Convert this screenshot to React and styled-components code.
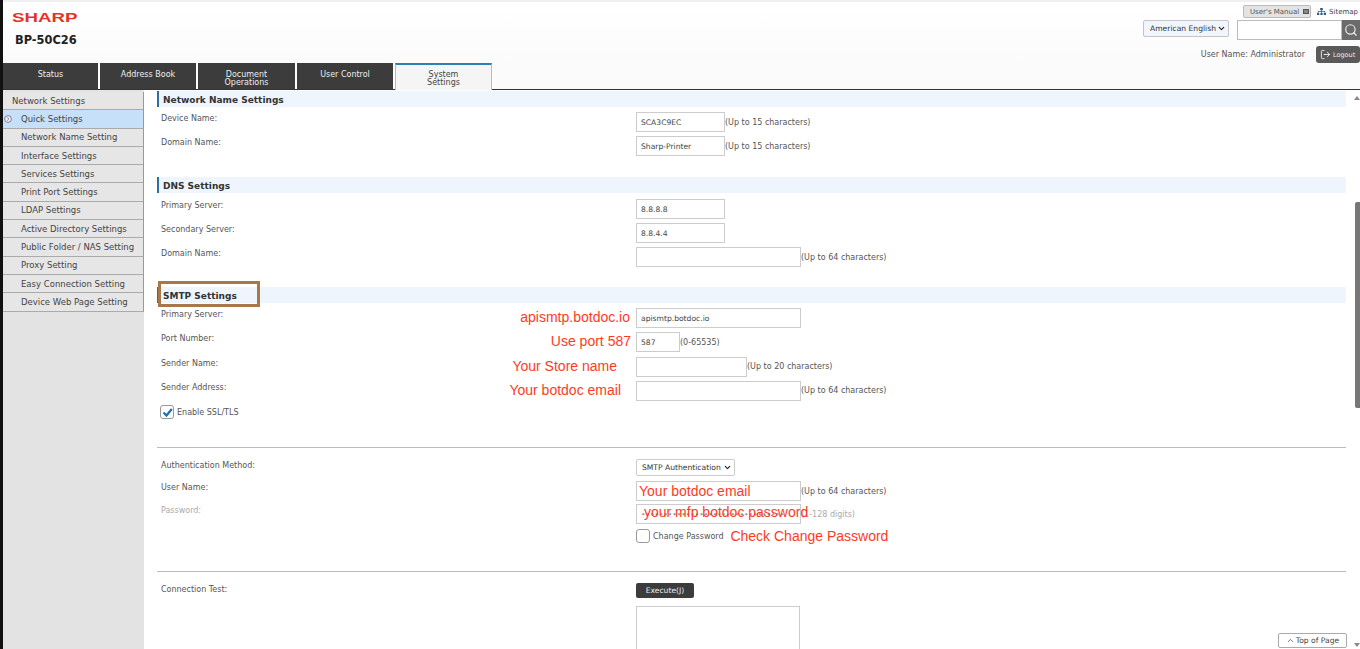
import React from 'react';
import styled, { createGlobalStyle } from 'styled-components';
import { Search, LogOut, ChevronUp, ChevronDown } from 'lucide-react';
import { FaSitemap } from 'react-icons/fa';

const GlobalStyle = createGlobalStyle`
  html, body {
    margin: 0;
    padding: 0;
    height: 100%;
    overflow: hidden;
    background: #fff;
  }
  * { box-sizing: border-box; }
  body {
    font-family: "DejaVu Sans", Verdana, sans-serif;
    font-size: 8px;
    color: #444;
  }
`;

const Page = styled.div`
  height: 649px;
  border-left: 3px solid #111;
  display: flex;
  flex-direction: column;
  overflow: hidden;
  position: relative;
`;

const Header = styled.header`
  height: 63px;
  flex: none;
  display: flex;
  justify-content: space-between;
  border-top: 2px solid #f0f0f0;
  background: linear-gradient(#fff, #fbfbfb);
`;

const Brand = styled.div`
  padding: 9px 0 0 9px;
`;

const Logo = styled.div`
  font-family: "Liberation Sans", Arial, sans-serif;
  font-weight: 700;
  font-size: 13px;
  line-height: 14px;
  color: #e8302a;
  transform: scaleX(1.44);
  transform-origin: left center;
`;

const Model = styled.div`
  margin: 8px 0 0 3px;
  font-weight: 700;
  font-size: 11.4px;
  line-height: 14px;
  color: #222;
`;

const Tools = styled.div`
  display: flex;
  flex-direction: column;
  align-items: flex-end;
`;

const LinkRow = styled.div`
  display: flex;
  align-items: center;
  height: 13px;
  margin-top: 3px;
  gap: 6px;
  padding-right: 2px;
`;

const ManualButton = styled.span`
  display: flex;
  align-items: center;
  gap: 4px;
  width: 68px;
  height: 13px;
  padding-left: 6px;
  font-size: 7px;
  color: #555;
  background: #e3e3e3;
  border: 1px solid #bbb;
  border-radius: 2px;
`;

const ManualIcon = styled.i`
  display: block;
  width: 6px;
  height: 5px;
  border: 1px solid #555;
  background: #888;
`;

const SiteLink = styled.span`
  display: flex;
  align-items: center;
  gap: 3px;
  font-size: 7px;
  color: #444;
  svg { color: #2d5c8a; }
`;

const SearchRow = styled.div`
  display: flex;
  align-items: flex-start;
  margin-top: 2px;
  gap: 8px;
`;

const SelectWrap = styled.div`
  position: relative;
  width: ${(p) => p.$w}px;
  height: 17px;
  svg {
    position: absolute;
    right: 3px;
    top: 4px;
    color: #222;
    pointer-events: none;
  }
`;

const PlainSelect = styled.select`
  appearance: none;
  width: 100%;
  height: 100%;
  padding: 0 0 0 ${(p) => p.$pad}px;
  font-family: "DejaVu Sans", Verdana, sans-serif;
  font-size: 7.6px;
  color: #333;
  background: ${(p) => p.$bg};
  border: 1px solid ${(p) => p.$line};
  border-radius: 2px;
`;

const SearchBox = styled.div`
  display: flex;
  width: 123px;
  height: 20px;
`;

const SearchInput = styled.div`
  flex: 1;
  background: #fff;
  border: 1px solid #bbb;
`;

const SearchButton = styled.div`
  width: 18px;
  display: flex;
  align-items: center;
  justify-content: center;
  background: #6b6b6b;
  color: #eee;
`;

const UserRow = styled.div`
  display: flex;
  align-items: center;
  margin-top: 6px;
  gap: 11px;
`;

const UserName = styled.span`
  font-size: 8px;
  color: #555;
`;

const LogoutButton = styled.span`
  display: flex;
  align-items: center;
  gap: 2px;
  width: 44px;
  height: 17px;
  padding-left: 4px;
  font-size: 6.5px;
  color: #eee;
  background: #5a5a5a;
  border-radius: 3px;
`;

const TabBar = styled.nav`
  height: 27px;
  flex: none;
  display: flex;
  gap: 2px;
  border-bottom: 1px solid #333;
  background: #fbfbfb;
`;

const Tab = styled.div`
  width: ${(p) => p.$w}px;
  height: ${(p) => (p.$active ? '27px' : '26px')};
  padding-top: ${(p) => (p.$active ? '6px' : '8px')};
  text-align: center;
  font-size: 8px;
  line-height: 8px;
  color: ${(p) => (p.$active ? '#444' : '#eee')};
  background: ${(p) => (p.$active ? '#f5f5f5' : '#3c3c3c')};
  border: ${(p) => (p.$active ? '1px solid #bbb' : 'none')};
  border-top: ${(p) => (p.$active ? '2px solid #2f7fb5' : 'none')};
  border-bottom: none;
`;

const Body = styled.div`
  flex: 1;
  min-height: 0;
  display: flex;
`;

const Sidebar = styled.aside`
  width: 141px;
  flex: none;
  background: #e3e3e3;
  padding-top: 2px;
`;

const MenuList = styled.ul`
  list-style: none;
  margin: 0;
  padding: 0;
  border-right: 1px solid #999;
`;

const MenuItem = styled.li`
  height: 18.3px;
  display: flex;
  align-items: center;
  position: relative;
  padding-left: ${(p) => (p.$head ? '9px' : '18px')};
  font-size: 8.5px;
  color: #444;
  white-space: nowrap;
  background: ${(p) => (p.$active ? '#c5e0f8' : '#e6e6e6')};
  border-bottom: 1px solid #aaa;
`;

const ActiveDot = styled.svg`
  position: absolute;
  left: 1px;
  top: 5px;
`;

const Main = styled.main`
  flex: 1;
  min-width: 0;
  padding: 1px 0 0 13px;
  background: #fff;
`;

const Section = styled.section`
  margin-top: ${(p) => p.$top || 0}px;
`;

const SectionHead = styled.h2`
  margin: 0 0 ${(p) => p.$gap || 5}px;
  height: 16px;
  display: flex;
  align-items: center;
  position: relative;
  padding: 1px 0 0 4px;
  font-size: 9px;
  font-weight: 700;
  color: #333;
  background: #eef5fd;
  border-left: 2px solid #2a6fa8;
`;

const Highlight = styled.span`
  position: absolute;
  left: -1px;
  top: -6px;
  width: 102px;
  height: 26px;
  border: 3px solid #a9784a;
`;

const Row = styled.div`
  display: grid;
  grid-template-columns: 479px 1fr;
  height: ${(p) => p.$h || 24.3}px;
`;

const LabelCell = styled.div`
  display: flex;
  justify-content: space-between;
  padding-left: 4px;
  padding-right: ${(p) => p.$pad || 0}px;
`;

const Label = styled.label`
  font-size: 8px;
  line-height: 14px;
  color: ${(p) => (p.$muted ? '#aaa' : '#555')};
`;

const Note = styled.span`
  font-family: "Liberation Sans", Arial, sans-serif;
  font-size: 14px;
  line-height: 18px;
  color: #ff3b1f;
  white-space: nowrap;
`;

const Field = styled.div`
  display: flex;
  align-items: ${(p) => (p.$start ? 'flex-start' : 'center')};
  align-self: start;
  position: relative;
  height: 20px;
  font-size: 8px;
  color: ${(p) => (p.$muted ? '#aaa' : '#555')};
`;

const TextBox = styled.input`
  width: ${(p) => p.$w}px;
  height: 20px;
  padding: 0 4px;
  font-family: "DejaVu Sans", Verdana, sans-serif;
  font-size: 7.6px;
  color: ${(p) => (p.$muted ? '#999' : '#444')};
  background: #fff;
  border: 1px solid #ccc;
  outline: none;
`;

const OverNote = styled(Note)`
  position: absolute;
  left: ${(p) => p.$left}px;
  top: ${(p) => p.$topOff}px;
`;

const Check = styled.span`
  display: inline-flex;
  align-items: center;
  justify-content: center;
  width: 14px;
  height: 14px;
  flex: none;
  background: #fff;
  border: 1px solid #999;
  border-radius: 3px;
`;

const CheckRow = styled.div`
  display: flex;
  align-items: center;
  gap: 3px;
  height: 14px;
  padding-left: ${(p) => p.$pad}px;
  font-size: 8px;
  color: #555;
`;

const Rule = styled.hr`
  margin: ${(p) => p.$top}px 0 ${(p) => p.$bottom}px;
  border: none;
  border-top: 1px solid #bbb;
`;

const ExecuteButton = styled.button`
  width: 58px;
  height: 15px;
  padding: 0;
  font-family: "DejaVu Sans", Verdana, sans-serif;
  font-size: 7.6px;
  color: #eee;
  background: #3c3c3c;
  border: none;
  border-radius: 2px;
`;

const ResultBox = styled.div`
  margin-left: 479px;
  width: 164px;
  height: 60px;
  background: #fff;
  border: 1px solid #ccc;
`;

const Scrollbar = styled.div`
  width: 14px;
  flex: none;
  display: flex;
  flex-direction: column;
  align-items: flex-end;
  padding-top: 6px;
  background: #fff;
`;

const ArrowUp = styled.i`
  width: 0;
  height: 0;
  border-left: 3px solid transparent;
  border-right: 3px solid transparent;
  border-bottom: 4px solid #888;
`;

const ArrowDown = styled(ArrowUp)`
  margin-top: 235px;
  border-bottom: none;
  border-top: 4px solid #888;
`;

const Thumb = styled.div`
  width: 5px;
  height: 206px;
  margin-top: 102px;
  background: #777;
  border-radius: 2px 0 0 2px;
`;

const TopOfPage = styled.span`
  position: absolute;
  right: 13px;
  bottom: 1px;
  width: 69px;
  height: 15px;
  display: flex;
  align-items: center;
  justify-content: center;
  gap: 1px;
  font-size: 7.6px;
  color: #444;
  background: #fff;
  border: 1px solid #aaa;
  border-radius: 2px;
`;

const tabs = [
  { w: 95, label: 'Status' },
  { w: 96, label: 'Address Book' },
  { w: 97, label: 'Document Operations' },
  { w: 96, label: 'User Control' },
  { w: 97, label: 'System Settings', active: true },
];

const menu = [
  'Quick Settings',
  'Network Name Setting',
  'Interface Settings',
  'Services Settings',
  'Print Port Settings',
  'LDAP Settings',
  'Active Directory Settings',
  'Public Folder / NAS Setting',
  'Proxy Setting',
  'Easy Connection Setting',
  'Device Web Page Setting',
];

const FormRow = ({ label, note, pad, w, value, hint, h }) => (
  <Row $h={h}>
    <LabelCell $pad={pad}>
      <Label>{label}</Label>
      {note && <Note>{note}</Note>}
    </LabelCell>
    <Field>
      <TextBox $w={w} type="text" defaultValue={value} readOnly />
      {hint}
    </Field>
  </Row>
);

const App = () => (
  <Page>
    <GlobalStyle />
    <Header>
      <Brand>
        <Logo>SHARP</Logo>
        <Model>BP-50C26</Model>
      </Brand>
      <Tools>
        <LinkRow>
          <ManualButton>
            User's Manual <ManualIcon />
          </ManualButton>
          <SiteLink>
            <FaSitemap size={9} /> Sitemap
          </SiteLink>
        </LinkRow>
        <SearchRow>
          <SelectWrap $w={86}>
            <PlainSelect $pad={6} $bg="#f1f6fc" $line="#c4c4c4" defaultValue="en">
              <option value="en">American English</option>
            </PlainSelect>
            <ChevronDown size={9} strokeWidth={3} />
          </SelectWrap>
          <SearchBox>
            <SearchInput />
            <SearchButton>
              <Search size={14} />
            </SearchButton>
          </SearchBox>
        </SearchRow>
        <UserRow>
          <UserName>User Name: Administrator</UserName>
          <LogoutButton>
            <LogOut size={11} /> Logout
          </LogoutButton>
        </UserRow>
      </Tools>
    </Header>

    <TabBar>
      {tabs.map((t) => (
        <Tab key={t.label} $w={t.w} $active={t.active}>
          {t.label.includes('Document') || t.active ? (
            <span>
              {t.label.split(' ')[0]}
              <br />
              {t.label.split(' ')[1]}
            </span>
          ) : (
            t.label
          )}
        </Tab>
      ))}
    </TabBar>

    <Body>
      <Sidebar>
        <MenuList>
          <MenuItem $head>Network Settings</MenuItem>
          {menu.map((m, i) => (
            <MenuItem key={m} $active={i === 0}>
              {i === 0 && (
                <ActiveDot width="8" height="8" viewBox="0 0 8 8">
                  <circle cx="4" cy="4" r="3.4" fill="#eef" stroke="#667" strokeWidth="0.8" />
                  <path d="M3.2 2.4 L4.8 4 L3.2 5.6" fill="none" stroke="#667" strokeWidth="0.8" />
                </ActiveDot>
              )}
              {m}
            </MenuItem>
          ))}
        </MenuList>
      </Sidebar>

      <Main>
        <Section>
          <SectionHead>Network Name Settings</SectionHead>
          <FormRow label="Device Name:" w={89} value="SCA3C9EC" hint="(Up to 15 characters)" h={24} />
          <FormRow label="Domain Name:" w={89} value="Sharp-Printer" hint="(Up to 15 characters)" h={24} />
        </Section>

        <Section $top={17}>
          <SectionHead $gap={6}>DNS Settings</SectionHead>
          <FormRow label="Primary Server:" w={89} value="8.8.8.8" h={24} />
          <FormRow label="Secondary Server:" w={89} value="8.8.4.4" h={24} />
          <FormRow label="Domain Name:" w={165} hint="(Up to 64 characters)" h={24} />
        </Section>

        <Section $top={16}>
          <SectionHead>
            SMTP Settings
            <Highlight />
          </SectionHead>
          <FormRow
            label="Primary Server:"
            note="apismtp.botdoc.io"
            pad={6}
            w={165}
            value="apismtp.botdoc.io"
          />
          <FormRow label="Port Number:" note="Use port 587" pad={5} w={44} value="587" hint="(0-65535)" />
          <FormRow label="Sender Name:" note="Your Store name" pad={19} w={111} hint="(Up to 20 characters)" />
          <FormRow label="Sender Address:" note="Your botdoc email" pad={15} w={165} hint="(Up to 64 characters)" />
          <CheckRow $pad={3}>
            <Check>
              <svg width="11" height="11" viewBox="0 0 11 11">
                <path d="M1.5 5.5 L4.5 8.5 L9.8 2" fill="none" stroke="#1d6fb0" strokeWidth="2.2" />
              </svg>
            </Check>
            Enable SSL/TLS
          </CheckRow>
        </Section>

        <Rule $top={28} $bottom={11} />

        <Row $h={22}>
          <LabelCell>
            <Label>Authentication Method:</Label>
          </LabelCell>
          <Field $start>
            <SelectWrap $w={99}>
              <PlainSelect $pad={5} $bg="#fff" $line="#ccc" defaultValue="smtp">
                <option value="smtp">SMTP Authentication</option>
              </PlainSelect>
              <ChevronDown size={9} strokeWidth={3} />
            </SelectWrap>
          </Field>
        </Row>
        <Row $h={23}>
          <LabelCell>
            <Label>User Name:</Label>
          </LabelCell>
          <Field>
            <TextBox $w={165} readOnly />
            (Up to 64 characters)
            <OverNote $left={3} $topOff={1}>Your botdoc email</OverNote>
          </Field>
        </Row>
        <Row $h={25}>
          <LabelCell>
            <Label $muted>Password:</Label>
          </LabelCell>
          <Field $muted>
            <TextBox $w={165} $muted type="password" defaultValue="passwordpasswordpasswordpassword" readOnly />
            (1-128 digits)
            <OverNote $left={8} $topOff={-1}>your mfp botdoc password</OverNote>
          </Field>
        </Row>
        <Row $h={14}>
          <LabelCell />
          <Field $start>
            <CheckRow $pad={0}>
              <Check />
              Change Password
              <Note>&nbsp;Check Change Password</Note>
            </CheckRow>
          </Field>
        </Row>

        <Rule $top={28} $bottom={11} />

        <Row $h={23}>
          <LabelCell>
            <Label>Connection Test:</Label>
          </LabelCell>
          <Field $start>
            <ExecuteButton>Execute(J)</ExecuteButton>
          </Field>
        </Row>
        <ResultBox />
      </Main>

      <Scrollbar>
        <ArrowUp />
        <Thumb />
        <ArrowDown />
      </Scrollbar>
    </Body>

    <TopOfPage>
      <ChevronUp size={9} /> Top of Page
    </TopOfPage>
  </Page>
);

export default App;
